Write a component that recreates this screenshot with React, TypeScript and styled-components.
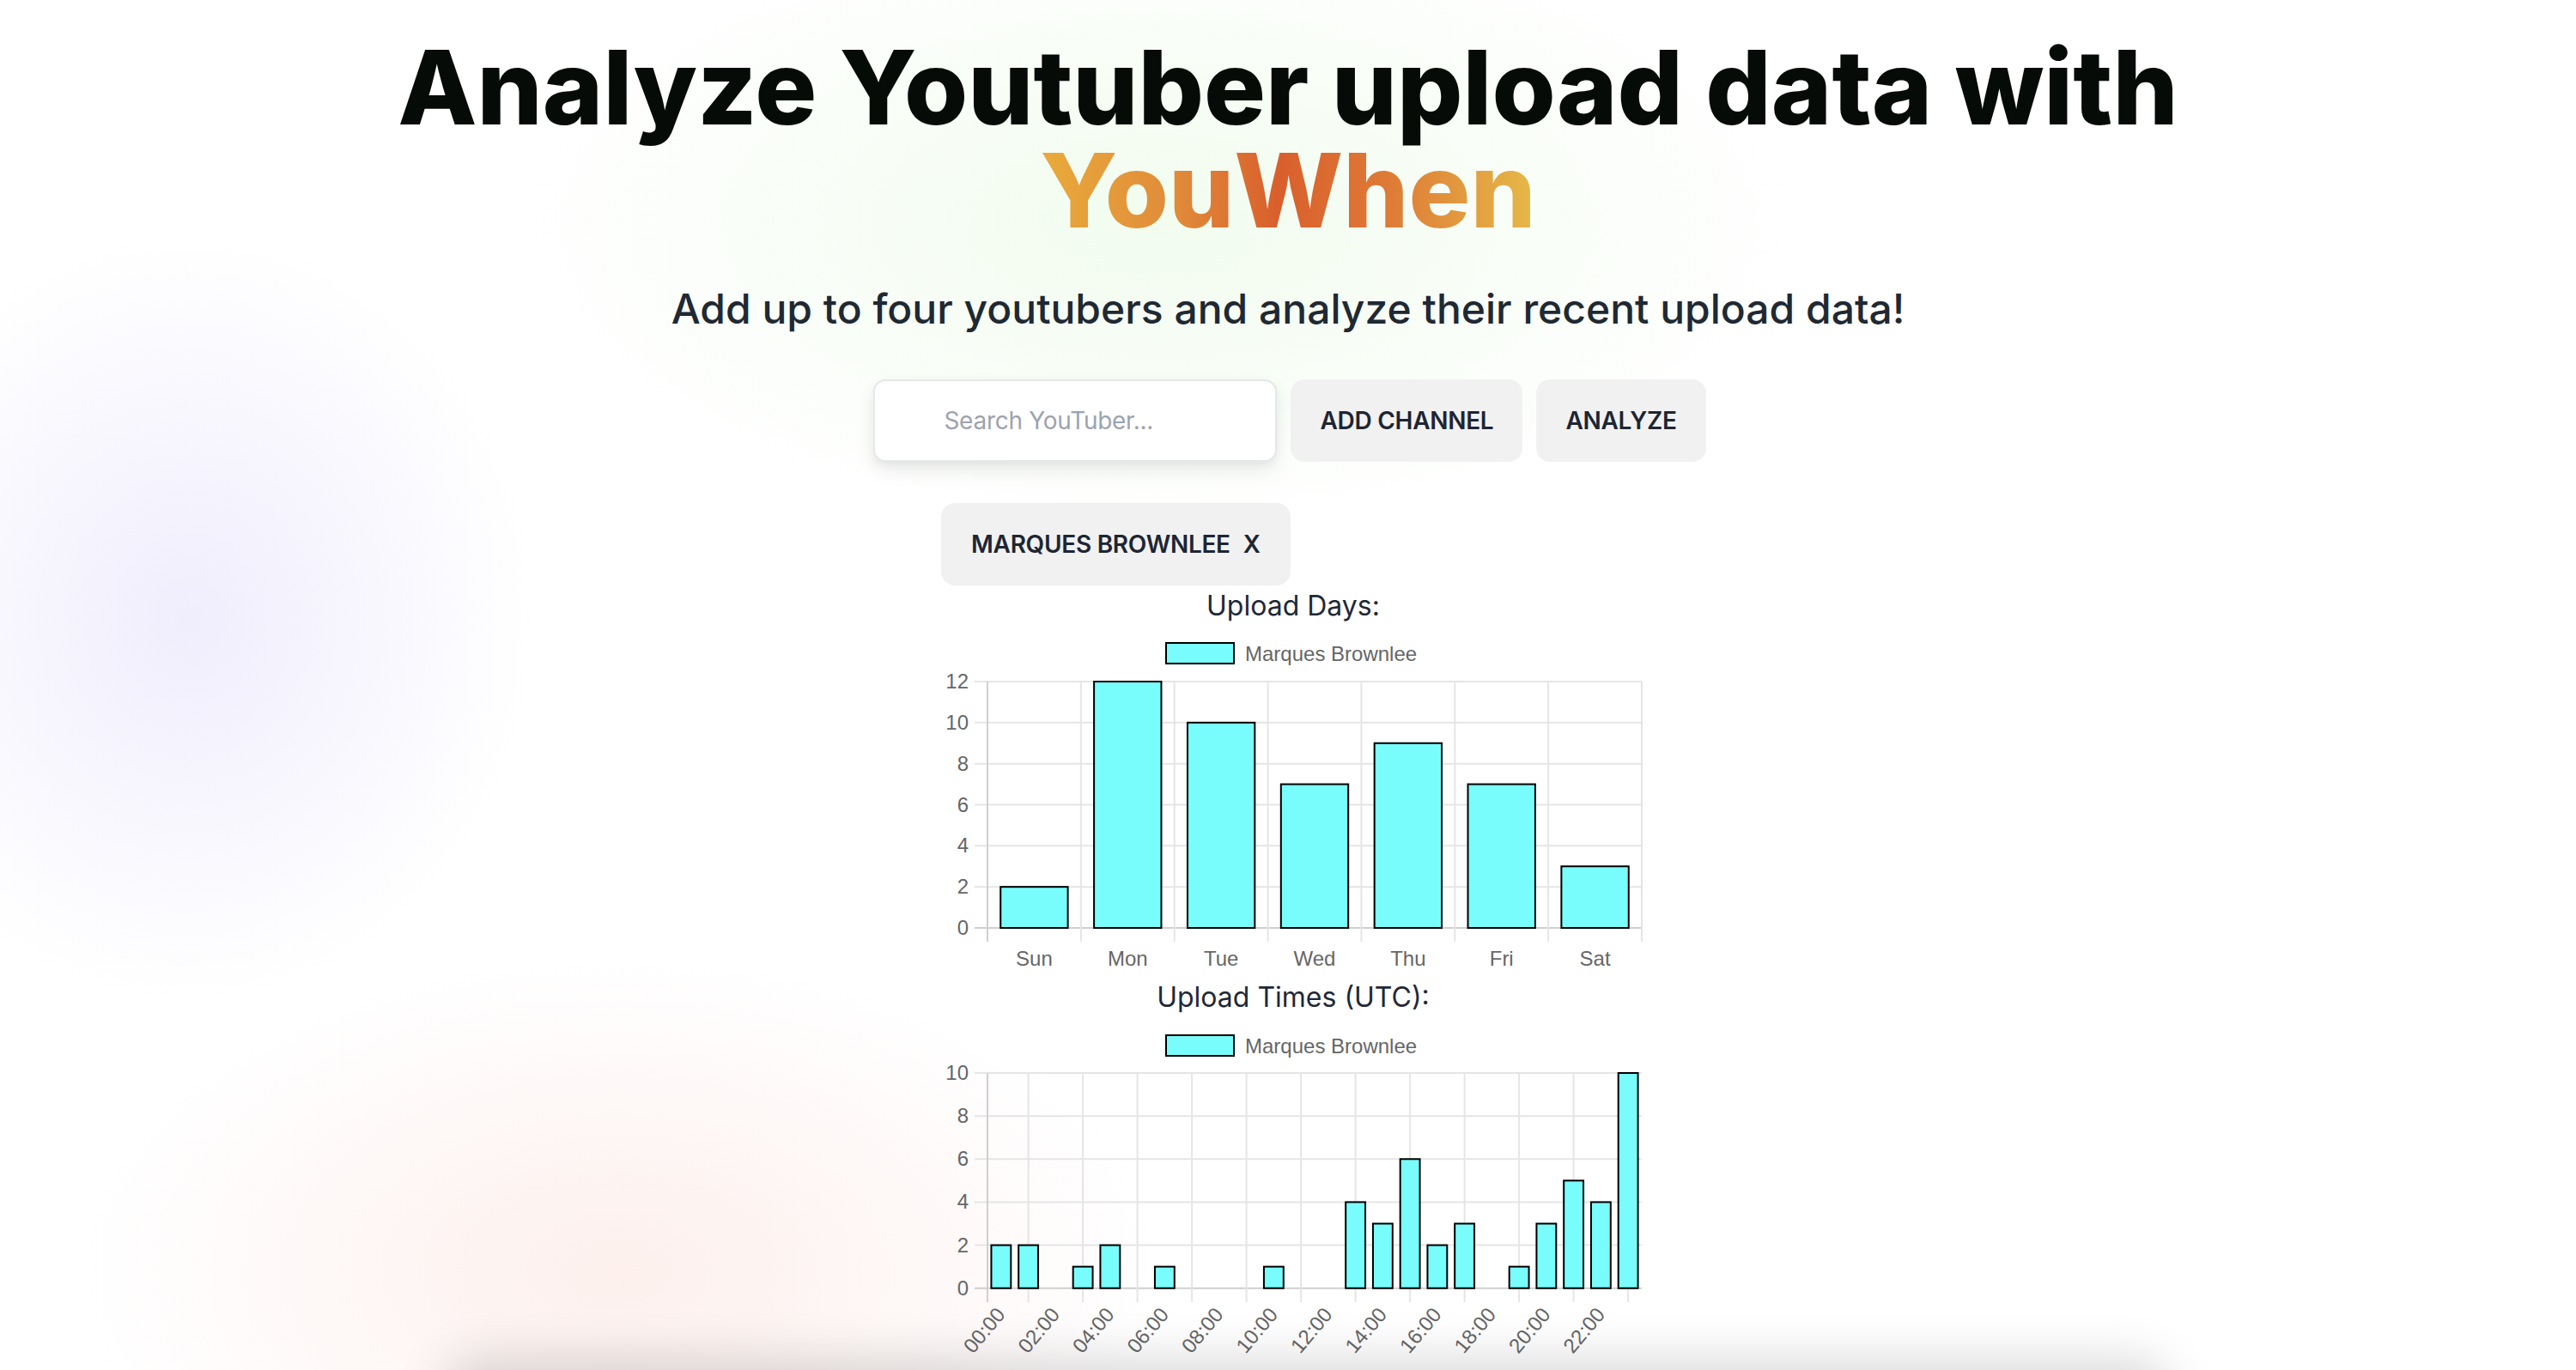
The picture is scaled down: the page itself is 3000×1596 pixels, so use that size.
import React from "react";
import styled, { createGlobalStyle } from "styled-components";

const GlobalStyle = createGlobalStyle`
  html, body { margin: 0; padding: 0; }
  body {
    font-family: Inter, "Noto Sans", sans-serif;
    background: #ffffff;
    overflow: hidden;
  }
  * { box-sizing: border-box; }
`;

const Page = styled.div`
  position: relative;
  min-height: 1596px;
  height: 1596px;
  overflow: hidden;
  display: flex;
  flex-direction: column;
  align-items: center;
  padding-top: 42px;
  background:
    radial-gradient(ellipse 560px 620px at 220px 720px, rgba(236, 233, 252, 0.8), rgba(236, 233, 252, 0) 72%),
    radial-gradient(ellipse 1100px 520px at 1350px 260px, rgba(238, 251, 234, 0.8), rgba(238, 251, 234, 0) 70%),
    radial-gradient(ellipse 900px 520px at 720px 1480px, rgba(252, 236, 232, 0.8), rgba(252, 236, 232, 0) 70%),
    #ffffff;
`;

const Title = styled.h1`
  margin: 0;
  font-family: Inter, sans-serif;
  font-size: 120px;
  line-height: 120px;
  font-weight: 800;
  letter-spacing: 0;
  color: #070b08;
  text-align: center;
`;

const TitleLine = styled.span`
  display: block;
`;

const Brand = styled.span`
  display: inline-block;
  background: linear-gradient(90deg, #e9ab3b 0%, #e08a3a 28%, #d95f2c 48%, #de7a36 70%, #e6ba48 100%);
  -webkit-background-clip: text;
  background-clip: text;
  color: transparent;
`;

const Subtitle = styled.p`
  margin: 46px 0 0;
  font-size: 48px;
  line-height: 64px;
  font-weight: 500;
  letter-spacing: 0;
  color: #1f2933;
  text-align: center;
`;

const SearchRow = styled.div`
  margin-top: 50px;
  display: flex;
  gap: 16px;
  transform: translateX(2px);
`;

const SearchInput = styled.input`
  width: 470px;
  height: 96px;
  padding: 0 24px 0 80px;
  border: 2px solid #e6e7eb;
  border-radius: 14px;
  background: #ffffff;
  font-family: Inter, sans-serif;
  font-size: 28px;
  letter-spacing: -0.01em;
  color: #1f2937;
  outline: none;
  box-shadow: 0 10px 22px rgba(0, 0, 0, 0.08), 0 4px 8px rgba(0, 0, 0, 0.04);
  &::placeholder { color: #9ca3af; }
`;

const PillButton = styled.button`
  height: 96px;
  padding: 0 34px;
  border: none;
  border-radius: 16px;
  background: #f1f1f1;
  font-family: Inter, sans-serif;
  font-size: 28px;
  font-weight: 600;
  letter-spacing: -0.01em;
  color: #1e2533;
  cursor: pointer;
`;

const ChartColumn = styled.div`
  width: 832px;
  padding-left: 12px;
  margin-top: 48px;
  display: flex;
  flex-direction: column;
`;

const ChipRow = styled.div`
  display: flex;
`;

const Chip = styled(PillButton)`
  padding: 0 35px;
  display: flex;
  align-items: center;
  gap: 15px;
`;

const ChartTitle = styled.h3`
  margin: 0;
  font-size: 32px;
  line-height: 48px;
  font-weight: 400;
  color: #1f2937;
  text-align: center;
  width: 820px;
`;

const ChartSvg = styled.svg`
  display: block;
  font-family: "Liberation Sans", Arial, sans-serif;
`;

const Footer = styled.div`
  position: absolute;
  left: 516px;
  right: 474px;
  top: 1600px;
  height: 200px;
  border-radius: 40px;
  background: #fff;
  box-shadow: 0 -14px 60px rgba(0, 0, 0, 0.16);
`;

const CYAN = "#79fcfc";
const GRID = "#e5e5e5";
const AXIS = "#cfcfcf";
const LABEL = "#666666";

const days = [
  { l: "Sun", v: 2 },
  { l: "Mon", v: 12 },
  { l: "Tue", v: 10 },
  { l: "Wed", v: 7 },
  { l: "Thu", v: 9 },
  { l: "Fri", v: 7 },
  { l: "Sat", v: 3 },
];

const hours = [2, 2, 0, 1, 2, 0, 1, 0, 0, 0, 1, 0, 0, 4, 3, 6, 2, 3, 0, 1, 3, 5, 4, 10];

const PLOT_L = 54;
const PLOT_R = 816;

function Legend({ y }: { y: number }) {
  return (
    <g>
      <rect x={262} y={y} width={79} height={24} fill={CYAN} stroke="#000" strokeWidth={2} />
      <text x={354} y={y + 21} fontSize={24} fill={LABEL}>Marques Brownlee</text>
    </g>
  );
}

function DaysChart() {
  const y0 = 351;
  const unit = (351 - 64) / 12;
  const cw = (PLOT_R - PLOT_L) / 7;
  const bw = cw * 0.72;
  return (
    <ChartSvg width={820} height={408} viewBox="0 0 820 408">
      <Legend y={19} />
      {[0, 2, 4, 6, 8, 10, 12].map((v) => (
        <g key={v}>
          <line x1={39} x2={PLOT_R} y1={y0 - v * unit} y2={y0 - v * unit} stroke={v === 0 ? AXIS : GRID} strokeWidth={2} />
          <text x={32} y={y0 - v * unit + 8} fontSize={24} fill={LABEL} textAnchor="end">{v}</text>
        </g>
      ))}
      {Array.from({ length: 8 }).map((_, k) => (
        <line key={k} x1={PLOT_L + k * cw} x2={PLOT_L + k * cw} y1={64} y2={367} stroke={k === 0 ? AXIS : GRID} strokeWidth={2} />
      ))}
      {days.map((d, i) => {
        const x = PLOT_L + i * cw + (cw - bw) / 2;
        const h = d.v * unit;
        return (
          <g key={d.l}>
            <rect x={x} y={y0 - h} width={bw} height={h} fill={CYAN} stroke="#000" strokeWidth={2} />
            <text x={PLOT_L + (i + 0.5) * cw} y={395} fontSize={24} fill={LABEL} textAnchor="middle">{d.l}</text>
          </g>
        );
      })}
    </ChartSvg>
  );
}

function TimesChart() {
  const y0 = 314.7;
  const unit = (314.7 - 64) / 10;
  const cw = (PLOT_R - PLOT_L) / 24;
  const bw = cw * 0.72;
  const gridXs = [PLOT_L, ...Array.from({ length: 12 }).map((_, k) => PLOT_L + cw * 1.5 + k * 2 * cw)];
  return (
    <ChartSvg width={820} height={420} viewBox="0 0 820 420">
      <Legend y={20} />
      {[0, 2, 4, 6, 8, 10].map((v) => (
        <g key={v}>
          <line x1={39} x2={PLOT_R} y1={y0 - v * unit} y2={y0 - v * unit} stroke={v === 0 ? AXIS : GRID} strokeWidth={2} />
          <text x={32} y={y0 - v * unit + 8} fontSize={24} fill={LABEL} textAnchor="end">{v}</text>
        </g>
      ))}
      {gridXs.map((x, k) => (
        <line key={k} x1={x} x2={x} y1={64} y2={331} stroke={k === 0 ? AXIS : GRID} strokeWidth={2} />
      ))}
      {hours.map((v, i) => {
        const x = PLOT_L + i * cw + (cw - bw) / 2;
        const h = v * unit;
        return v > 0 ? (
          <rect key={i} x={x} y={y0 - h} width={bw} height={h} fill={CYAN} stroke="#000" strokeWidth={2} />
        ) : null;
      })}
      {Array.from({ length: 12 }).map((_, j) => {
        const cx = PLOT_L + (2 * j + 0.5) * cw + 6;
        const cy = 346;
        const label = `${String(2 * j).padStart(2, "0")}:00`;
        return (
          <text key={j} x={cx} y={cy} fontSize={24} fill={LABEL} textAnchor="end" transform={`rotate(-50 ${cx} ${cy})`}>
            {label}
          </text>
        );
      })}
    </ChartSvg>
  );
}

export default function App() {
  return (
    <>
      <GlobalStyle />
      <Page>
        <Title>
          <TitleLine>Analyze Youtuber upload data with</TitleLine>
          <Brand>YouWhen</Brand>
        </Title>
        <Subtitle>Add up to four youtubers and analyze their recent upload data!</Subtitle>
        <SearchRow>
          <SearchInput placeholder="Search YouTuber..." />
          <PillButton>ADD CHANNEL</PillButton>
          <PillButton>ANALYZE</PillButton>
        </SearchRow>
        <ChartColumn>
          <ChipRow>
            <Chip>
              <span>MARQUES BROWNLEE</span>
              <span>X</span>
            </Chip>
          </ChipRow>
          <ChartTitle>Upload Days:</ChartTitle>
          <DaysChart />
          <ChartTitle>Upload Times (UTC):</ChartTitle>
          <TimesChart />
        </ChartColumn>
        <Footer />
      </Page>
    </>
  );
}
